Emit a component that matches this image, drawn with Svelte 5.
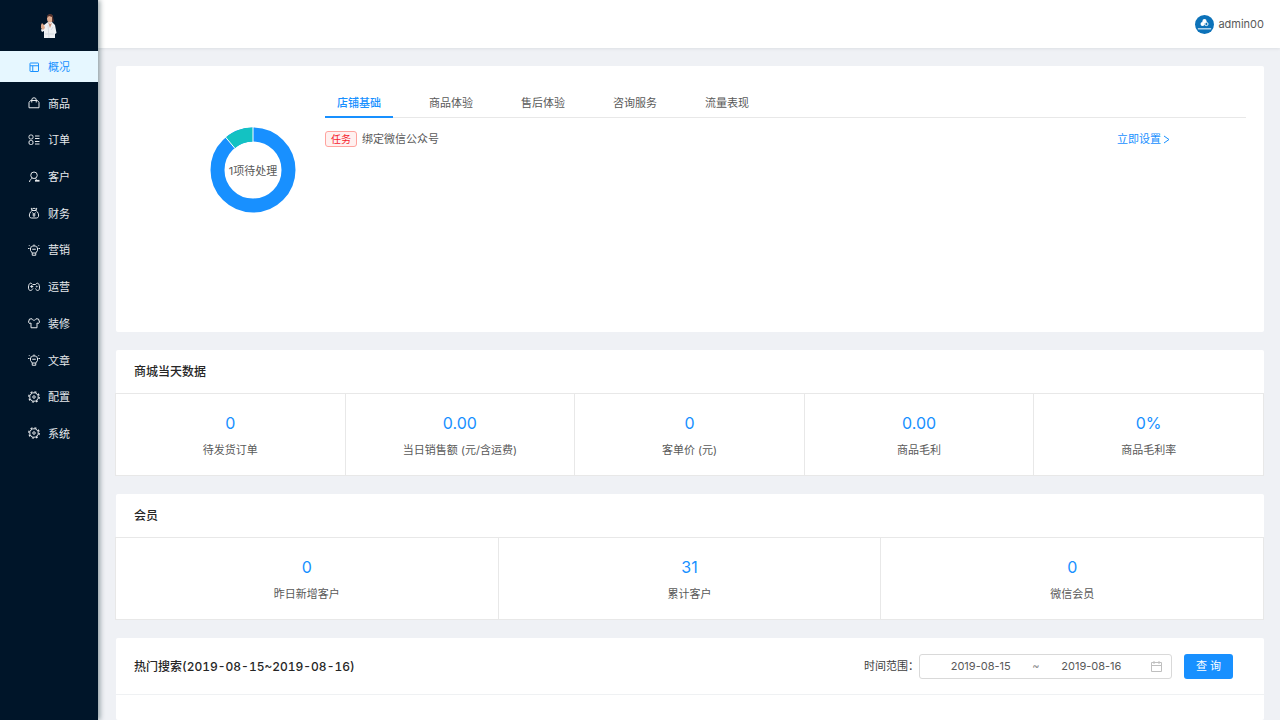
<script>
  let activeMenu = $state('概况');
  let activeTab = $state('店铺基础');
  let startDate = $state('2019-08-15');
  let endDate = $state('2019-08-16');

  const menu = [
    { name: '概况', icon: 'layout' },
    { name: '商品', icon: 'bag' },
    { name: '订单', icon: 'order' },
    { name: '客户', icon: 'user' },
    { name: '财务', icon: 'money' },
    { name: '营销', icon: 'bulb' },
    { name: '运营', icon: 'game' },
    { name: '装修', icon: 'shirt' },
    { name: '文章', icon: 'bulb' },
    { name: '配置', icon: 'gear' },
    { name: '系统', icon: 'gear' }
  ];

  const tabs = ['店铺基础', '商品体验', '售后体验', '咨询服务', '流量表现'];

  const todayStats = [
    { value: '0', label: '待发货订单' },
    { value: '0.00', label: '当日销售额 (元/含运费)' },
    { value: '0', label: '客单价 (元)' },
    { value: '0.00', label: '商品毛利' },
    { value: '0%', label: '商品毛利率' }
  ];

  const memberStats = [
    { value: '0', label: '昨日新增客户' },
    { value: '31', label: '累计客户' },
    { value: '0', label: '微信会员' }
  ];

  const searchRange = $derived(`${startDate}~${endDate}`);
</script>

{#snippet menuIcon(name)}
  <svg class="menu-icon" viewBox="0 0 24 24" aria-hidden="true">
    {#if name === 'layout'}
      <rect x="4" y="4" width="17" height="17" rx="1" />
      <path d="M4 9.5h17M9.5 9.5V21" />
    {:else if name === 'bag'}
      <path d="M2 21.500V11l3-4h14l3 4v10.500zM7.500 11V6a4.500 4.500 0 0 1 9 0v5" />
    {:else if name === 'order'}
      <rect x="2" y="2" width="8" height="8" rx="3" />
      <rect x="2" y="13" width="8" height="8" rx="3" />
      <path d="M14 4h9M14 9h9M14 15h9M14 20h9" />
    {:else if name === 'user'}
      <circle cx="12" cy="8.5" r="6.5" />
      <path d="M9 14.500c-4 1.500-5.500 4-6 7.500M15 14.500l2 3" />
      <path d="M14 19.500h9" stroke-width="3.500" />
    {:else if name === 'money'}
      <path d="M8 7L6.500 2.500l3 1.500L12 2l2.500 2 3-1.500L16 7zM8 7c-4 3-6 8-5 12 .5 2 2 3 4 3h10c2 0 3.500-1 4-3 1-4-1-9-5-12M9 11l3 4 3-4M12 15v5M9 16h6" />
    {:else if name === 'bulb'}
      <path d="M8.500 18v4.500h7V18l3.500-5V8l-3.500-4h-7L5 8v5zM8.500 10.500h7M8.500 18h7M12 1v3M2 2.500l2 2M22 2.500l-2 2M0 9h3M21 9h3" />
    {:else if name === 'game'}
      <path d="M9 7C5 1.500 1.500 5 1 12c-.5 7 4 9 7.500 5L10 15M15 15l1 2c3.500 4 7.500 2 7-5-.5-7-4-10.500-8-5M10 7h5M4.500 11h6M7.500 8v6" />
      <circle cx="17.500" cy="11" r="1" />
    {:else if name === 'shirt'}
      <path d="M8 3.500L3 4 1 10l2 3 3-1v9.500h12V12l3 1 2-3-2-6-5-.5c-1 4-7 4-8 0z" />
    {:else}
      <circle cx="12" cy="12" r="8.500" />
      <circle cx="12" cy="12" r="10.500" stroke-width="2.500" pathLength="80" stroke-dasharray="5 5" />
      <circle cx="12" cy="12" r="2.500" />
    {/if}
  </svg>
{/snippet}

{#snippet statRow(stats)}
  <div class="stats">
    {#each stats as stat}
      <div class="stat">
        <div class="stat-value">{stat.value}</div>
        <div class="stat-label">{stat.label}</div>
      </div>
    {/each}
  </div>
{/snippet}

<div class="layout">
  <aside class="sidebar">
    <div class="logo">
      <svg viewBox="0 0 16 24" role="img" aria-label="logo">
        <path d="M3 11l4-3h4l3 3 1.500 8-1.500 1v4H3v-7l-2 1-1-2z" fill="#eef0f3" />
        <path d="M0 11l1-2 2 2 1 3-2 2-2-2z" fill="#dda88a" />
        <path d="M7 8l2 2 2-1-2 5z" fill="#c98f76" />
        <ellipse cx="9" cy="4.500" rx="3" ry="4" fill="#dfad91" />
        <path d="M6 4c0-5 6-5 6-1l1 5-2-1V3L8 2z" fill="#54312c" />
        <path d="M7 11l1 13M12 13l-2 3M4 20h9" stroke="#d5dae0" fill="none" />
      </svg>
    </div>
    <nav>
      <ul class="menu">
        {#each menu as item}
          <li>
            <button
              class="menu-item"
              class:active={item.name === activeMenu}
              onclick={() => (activeMenu = item.name)}
            >
              {@render menuIcon(item.icon)}
              <span>{item.name}</span>
            </button>
          </li>
        {/each}
      </ul>
    </nav>
  </aside>

  <div class="page">
    <header class="topbar">
      <button class="account">
        <svg class="avatar" viewBox="0 0 20 20" aria-hidden="true">
          <circle cx="10" cy="10" r="10" fill="#0c72b9" />
          <circle cx="10" cy="6.500" r="2.200" fill="#fff" />
          <circle cx="8" cy="9.500" r="2.200" fill="#fff" />
          <circle cx="12" cy="9.500" r="1.700" fill="#0c72b9" stroke="#fff" />
          <path d="M3 14.500h14" stroke="#b9d8ed" stroke-width="1.500" fill="none" />
        </svg>
        <span>admin00</span>
      </button>
    </header>

    <main class="content">
      <section class="card overview">
        <div class="chart">
          <div class="donut">
            <svg viewBox="0 0 86 86" aria-hidden="true">
              <circle cx="43" cy="43" r="35.500" pathLength="360" class="ring" />
              <circle cx="43" cy="43" r="35.500" pathLength="360" class="ring-part" />
              <path d="M43 0v15M15.400 10l9.600 11.500" stroke="#fff" />
            </svg>
            <span class="donut-text">1项待处理</span>
          </div>
        </div>
        <div class="tasks">
          <div class="tabs" role="tablist">
            {#each tabs as tab}
              <button
                class="tab"
                class:active={tab === activeTab}
                role="tab"
                aria-selected={tab === activeTab}
                onclick={() => (activeTab = tab)}
              >
                {tab}
              </button>
            {/each}
          </div>
          <div class="task">
            <div class="task-name">
              <span class="tag">任务</span>
              <span>绑定微信公众号</span>
            </div>
            <a href="#setting">
              立即设置
              <svg class="arrow" viewBox="0 0 7 9" aria-hidden="true"><path d="M1 1l5 3.500-5 3.500" /></svg>
            </a>
          </div>
        </div>
      </section>

      <section class="card">
        <h2>商城当天数据</h2>
        {@render statRow(todayStats)}
      </section>

      <section class="card">
        <h2>会员</h2>
        {@render statRow(memberStats)}
      </section>

      <section class="card search">
        <div class="search-head">
          <h2>热门搜索({searchRange})</h2>
          <form class="filter" onsubmit={(e) => e.preventDefault()}>
            <label for="start-date">时间范围：</label>
            <div class="range">
              <input id="start-date" type="text" bind:value={startDate} />
              <span class="separator">~</span>
              <input type="text" aria-label="结束日期" bind:value={endDate} />
              <svg class="calendar" viewBox="0 0 11 11" aria-hidden="true">
                <path d="M.5 1.500h10v9H.5zM.5 4.500h10M3 0v3M8 0v3" />
              </svg>
            </div>
            <button class="primary" type="submit">查 询</button>
          </form>
        </div>
      </section>
    </main>
  </div>
</div>

<style>
  :global(body) {
    margin: 0;
    color: #595959;
    background: #eff1f5;
    font: 11px/16px Inter, 'Noto Sans CJK SC', sans-serif;
  }

  button,
  input {
    padding: 0;
    border: 0;
    background: none;
    color: inherit;
    font: inherit;
  }

  button {
    cursor: pointer;
  }

  a {
    color: #1890ff;
    text-decoration: none;
  }

  .layout {
    display: flex;
    min-height: 100vh;
  }

  /* sidebar */
  .sidebar {
    flex: 0 0 98px;
    z-index: 1;
    background: #001529;
    box-shadow: 2px 0 5px rgba(0, 33, 41, 0.4);
  }

  .logo {
    display: flex;
    align-items: center;
    justify-content: center;
    height: 51px;
  }

  .logo svg {
    width: 16px;
    height: 24px;
  }

  .menu {
    display: flex;
    flex-direction: column;
    justify-content: space-between;
    height: 398px;
    margin: 0;
    padding: 0;
    list-style: none;
  }

  .menu-item {
    display: flex;
    align-items: center;
    justify-content: center;
    gap: 8px;
    width: 100%;
    height: 31px;
    color: #e6e9ec;
  }

  .menu-item span {
    padding-top: 1px;
  }

  .menu-item.active {
    background: #e6f7ff;
    color: #1890ff;
  }

  .menu-icon {
    width: 12px;
    height: 12px;
    fill: none;
    stroke: currentColor;
    stroke-width: 2;
  }

  /* header */
  .page {
    display: flex;
    flex: 1;
    flex-direction: column;
    min-width: 0;
  }

  .topbar {
    display: flex;
    align-items: center;
    justify-content: flex-end;
    height: 48px;
    padding: 0 16px;
    background: #fff;
    box-shadow: 0 1px 3px rgba(0, 21, 41, 0.08);
  }

  .account {
    display: flex;
    align-items: center;
    gap: 4px;
  }

  .avatar {
    width: 19px;
    height: 19px;
  }

  .content {
    display: flex;
    flex: 1;
    flex-direction: column;
    gap: 18px;
    padding: 18px 16px 0 18px;
  }

  .card {
    border-radius: 2px;
    background: #fff;
  }

  h2 {
    margin: 0;
    padding: 0 18px;
    color: #262626;
    font-size: 12px;
    font-weight: 500;
    font-variant-numeric: tabular-nums;
    line-height: 43px;
  }

  /* overview */
  .overview {
    display: flex;
    min-height: 228px;
    padding: 20px 18px 18px;
  }

  .chart {
    display: flex;
    flex: 0 0 191px;
    align-items: flex-start;
    justify-content: flex-end;
  }

  .donut {
    display: grid;
    place-items: center;
    margin: 41px 29px 0 0;
  }

  .donut svg,
  .donut-text {
    grid-area: 1 / 1;
  }

  .donut svg {
    width: 86px;
    height: 86px;
  }

  .donut-text {
    padding-top: 2px;
  }

  .ring,
  .ring-part {
    fill: none;
    stroke: #1890ff;
    stroke-width: 14;
  }

  .ring-part {
    stroke: #13c2c2;
    stroke-dasharray: 40 320;
    stroke-dashoffset: 130;
  }

  .tasks {
    flex: 1;
  }

  .tabs {
    display: flex;
    gap: 24px;
    border-bottom: 1px solid #e8e8e8;
  }

  .tab {
    height: 32px;
    margin-bottom: -1px;
    padding: 3px 12px 0;
    border-bottom: 2px solid transparent;
  }

  .tab.active {
    border-color: #1890ff;
    color: #1890ff;
    font-weight: 500;
  }

  .task {
    display: grid;
    grid-template-columns: 86% 1fr;
    align-items: center;
    margin-top: 13px;
  }

  .task-name {
    display: flex;
    align-items: center;
    gap: 5px;
  }

  .tag {
    padding: 0 5px;
    border: 1px solid #ffa39e;
    border-radius: 3px;
    background: #fff1f0;
    color: #f5222d;
    font-size: 10px;
    line-height: 14px;
  }

  .arrow {
    width: 7px;
    height: 9px;
    margin-left: -1px;
    fill: none;
    stroke: currentColor;
    vertical-align: -1px;
  }

  /* statistics */
  .stats {
    display: flex;
    margin-left: -1px;
    border: 1px solid #e8e8e8;
    border-width: 1px 0 1px 1px;
  }

  .stat {
    flex: 1;
    padding: 17px 0;
    border-right: 1px solid #e8e8e8;
    text-align: center;
  }

  .stat-value {
    color: #1890ff;
    font-size: 16px;
    line-height: 24px;
  }

  .stat-label {
    margin-top: 7px;
  }

  /* search */
  .search {
    flex: 1;
    min-height: 82px;
  }

  .search-head {
    display: flex;
    align-items: center;
    justify-content: space-between;
    height: 56px;
    border-bottom: 1px solid #eff1f3;
  }

  .filter {
    display: flex;
    align-items: center;
    margin-right: 31px;
  }

  .filter label {
    color: #404040;
  }

  .range {
    display: flex;
    align-items: center;
    box-sizing: border-box;
    width: 253px;
    height: 25px;
    margin-right: 12px;
    padding: 0 9px;
    border: 1px solid #d9d9d9;
    border-radius: 3px;
  }

  .range input {
    flex: 1;
    min-width: 0;
    text-align: center;
  }

  .separator {
    color: #8c8c8c;
  }

  .calendar {
    width: 11px;
    height: 11px;
    margin-left: 8px;
    fill: none;
    stroke: #bfbfbf;
  }

  .primary {
    width: 49px;
    height: 25px;
    border-radius: 3px;
    background: #1890ff;
    color: #fff;
  }
</style>
